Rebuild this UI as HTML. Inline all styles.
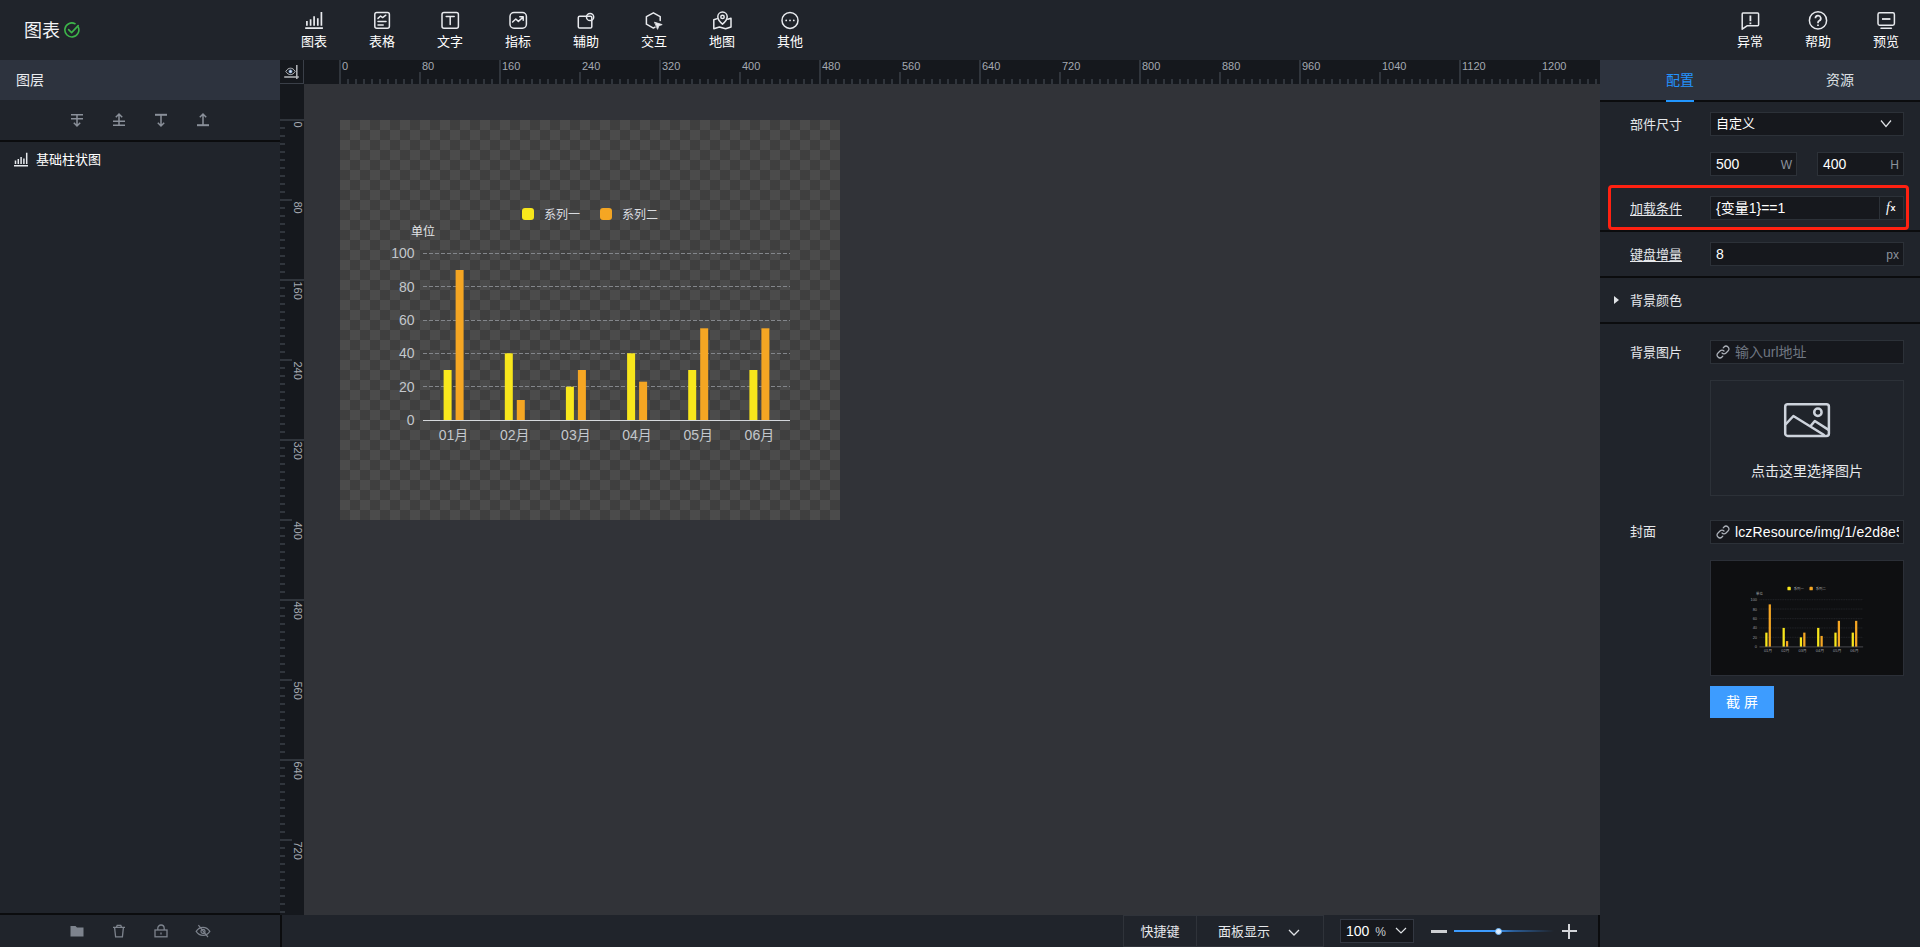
<!DOCTYPE html>
<html lang="zh-CN">
<head>
<meta charset="utf-8">
<title>图表</title>
<style>
*{box-sizing:border-box;margin:0;padding:0}
html,body{width:1920px;height:947px;overflow:hidden;background:#20242b;color:#fff;
  font-family:"Liberation Sans","Noto Sans CJK SC",sans-serif;font-size:13px}
.abs{position:absolute}
#top{position:absolute;left:0;top:0;width:1920px;height:60px;background:#20242b}
#title{position:absolute;left:24px;top:19px;font-size:18px;line-height:24px;color:#f2f3f5}
#ok{position:absolute;left:64px;top:22px;width:16px;height:16px}
.tb{position:absolute;top:0;width:68px;height:60px;text-align:center;color:#fff}
.tb svg{position:absolute;left:24px;top:10px;width:20px;height:20px}
.tb span{position:absolute;left:0;width:68px;top:33px;font-size:13px;line-height:18px}
/* left */
#left{position:absolute;left:0;top:60px;width:280px;height:887px;background:#20242b}
#lhead{position:absolute;left:0;top:0;width:280px;height:40px;background:#2d333e;font-size:14px;line-height:41px;padding-left:16px;color:#eceef1}
#ltools{position:absolute;left:0;top:40px;width:280px;height:40px}
#lsep{position:absolute;left:0;top:80px;width:280px;height:2px;background:#0b0c0e}
#layer{position:absolute;left:0;top:86px;width:280px;height:28px;line-height:28px;font-size:13px;color:#fff}
#lbot{position:absolute;left:0;top:853px;width:280px;height:34px;border-top:2px solid #0b0c0e}
/* ruler */
#corner{position:absolute;left:280px;top:60px;width:24px;height:24px;background:#15181d;border-right:1px solid #3a3f48;border-bottom:1px solid #3a3f48}
#hr{position:absolute;left:304px;top:60px;width:1296px;height:24px;background:#15181d;overflow:hidden}
#vr{position:absolute;left:280px;top:84px;width:24px;height:831px;background:#15181d;overflow:hidden}
#canvas{position:absolute;left:304px;top:84px;width:1296px;height:831px;background:#313338}
#widget{position:absolute;left:340px;top:120px;width:500px;height:400px;
  background-color:#3f3f3f;
  background-image:linear-gradient(45deg,#4b4b4b 25%,transparent 25%,transparent 75%,#4b4b4b 75%),linear-gradient(45deg,#4b4b4b 25%,transparent 25%,transparent 75%,#4b4b4b 75%);
  background-size:20px 20px;background-position:10px 0,20px 10px}
#cbot{position:absolute;left:280px;top:915px;width:1320px;height:32px;background:#20242b}
/* right */
#right{position:absolute;left:1600px;top:60px;width:320px;height:887px;background:#20242b}
#rtabs{position:absolute;left:0;top:0;width:320px;height:40px;background:#2d333e}
.rt{position:absolute;top:0;width:160px;height:40px;line-height:40px;text-align:center;font-size:14px;color:#dfe2e6}
.lab{position:absolute;left:30px;font-size:13px;line-height:20px;color:#e6e8eb;margin-top:1px}
.lab.u{text-decoration:underline;text-underline-offset:1.5px;text-decoration-thickness:1px}
.inp{position:absolute;height:24px;background:#16181d;border:1px solid #2c3138;font-size:14px;line-height:23px;color:#fff;padding-left:5px;white-space:nowrap;overflow:hidden}
.suf{position:absolute;right:4px;top:0.5px;color:#8b929c;font-size:12px}
.sep{position:absolute;left:0;width:320px;height:2px;background:#0b0c0e}
</style>
</head>
<body>
<div id="top">
  <div id="title">图表</div>
  <svg id="ok" viewBox="0 0 16 16" fill="none" stroke="#3db54a" stroke-width="1.6" stroke-linecap="round" stroke-linejoin="round"><path d="M14.3 5.2A7 7 0 1 1 11 1.7"/><path d="M4.6 7.6l3 3 6.6-7"/></svg>
  <div class="tb" style="left:280px"><svg viewBox="0 0 20 20" fill="none" stroke="#e8eaee" stroke-width="1.5" stroke-linecap="round" stroke-linejoin="round"><path d="M1.2 18.1h17.7M2.9 15.7v-4.8M6.6 15.7V9.2M10.1 15.7V6.2M13.8 15.7V8.2M17.4 15.7V2.1" stroke-linecap="butt" stroke-width="1.7"/></svg><span>图表</span></div>
  <div class="tb" style="left:348px"><svg viewBox="0 0 20 20" fill="none" stroke="#e8eaee" stroke-width="1.5" stroke-linecap="round" stroke-linejoin="round"><rect x="2.8" y="2.6" width="14.6" height="15.6" rx="2"/><path d="M6 8.4l2.6-2.4 2 1.6 3.2-2.4M6 11.6h8M6 15h5.2"/></svg><span>表格</span></div>
  <div class="tb" style="left:416px"><svg viewBox="0 0 20 20" fill="none" stroke="#e8eaee" stroke-width="1.5" stroke-linecap="round" stroke-linejoin="round"><rect x="2" y="2.6" width="16.4" height="15.6" rx="2"/><path d="M6.2 6.6h8M10.2 6.6v8"/></svg><span>文字</span></div>
  <div class="tb" style="left:484px"><svg viewBox="0 0 20 20" fill="none" stroke="#e8eaee" stroke-width="1.5" stroke-linecap="round" stroke-linejoin="round"><rect x="2" y="2.6" width="16.4" height="15.6" rx="4"/><path d="M4.6 12l3.2-3 2.6 2.4 4.6-4.2M11.8 6.8h3.4v3.4"/></svg><span>指标</span></div>
  <div class="tb" style="left:552px"><svg viewBox="0 0 20 20" fill="none" stroke="#e8eaee" stroke-width="1.5" stroke-linecap="round" stroke-linejoin="round"><rect x="2.3" y="6.2" width="13.5" height="11.9" rx="1.4"/><circle cx="14.1" cy="7" r="3.6"/></svg><span>辅助</span></div>
  <div class="tb" style="left:620px"><svg viewBox="0 0 20 20" fill="none" stroke="#e8eaee" stroke-width="1.5" stroke-linecap="round" stroke-linejoin="round"><path d="M16.2 10.4V6.6L9.4 2.8 2.4 6.6v7.6l7 3.9 1.6-.9"/><path d="M10.8 12.3l7.4 2.3-3.3 1.2-1.2 3.2z" fill="#e8eaee" stroke-width="0.8"/></svg><span>交互</span></div>
  <div class="tb" style="left:688px"><svg viewBox="0 0 20 20" fill="none" stroke="#e8eaee" stroke-width="1.5" stroke-linecap="round" stroke-linejoin="round"><path d="M10.5 14.2s-4.7-3.9-4.7-7.4a4.7 4.7 0 0 1 9.4 0c0 3.5-4.7 7.4-4.7 7.4z"/><circle cx="10.5" cy="6.9" r="1.7"/><path d="M5.2 8.6l-3.4 1.2v9l5.6-1.8 6.2 1.8 5.4-1.8V8.2l-3.2 1"/></svg><span>地图</span></div>
  <div class="tb" style="left:756px"><svg viewBox="0 0 20 20" fill="none" stroke="#e8eaee" stroke-width="1.5" stroke-linecap="round" stroke-linejoin="round"><circle cx="10" cy="10.4" r="8"/><path d="M6.2 10.4h.01M10 10.4h.01M13.8 10.4h.01" stroke-width="1.8"/></svg><span>其他</span></div>
  <div class="tb" style="left:1716px"><svg viewBox="0 0 20 20" fill="none" stroke="#e8eaee" stroke-width="1.5" stroke-linecap="round" stroke-linejoin="round"><path d="M3 3h14.6a1 1 0 0 1 1 1v10.8a1 1 0 0 1-1 1H7l-4.8 3.4V4a1 1 0 0 1 .8-1z"/><path d="M10.4 5.4v5.8M10.4 12.6v1.6" stroke-width="1.8" stroke-linecap="butt"/></svg><span>异常</span></div>
  <div class="tb" style="left:1784px"><svg viewBox="0 0 20 20" fill="none" stroke="#e8eaee" stroke-width="1.5" stroke-linecap="round" stroke-linejoin="round"><circle cx="10" cy="10.4" r="8.6"/><path d="M7.4 8.2a2.7 2.7 0 1 1 3.8 2.6c-.8.4-1.2 1-1.2 2v.4M10 14.6v1.5" stroke-linecap="butt" stroke-width="1.7"/></svg><span>帮助</span></div>
  <div class="tb" style="left:1852px"><svg viewBox="0 0 20 20" fill="none" stroke="#e8eaee" stroke-width="1.5" stroke-linecap="round" stroke-linejoin="round"><rect x="2" y="2.8" width="16.4" height="12.4" rx="1.6"/><path d="M6 9h8.4" stroke-width="1.8" stroke-linecap="butt"/><path d="M5 18.2h10.4"/></svg><span>预览</span></div>
</div>

<div id="left">
  <div id="lhead">图层</div>
  <div id="ltools"><svg class="abs" style="left:69px;top:12px;width:16px;height:16px" viewBox="0 0 16 16" fill="none" stroke="#8a909a" stroke-width="1.5" stroke-linecap="butt" stroke-linejoin="miter"><path d="M2 2.7h12M2 6.7h12M8 2.7v11.3M4.8 10.8L8 14l3.2-3.2"/></svg><svg class="abs" style="left:111px;top:12px;width:16px;height:16px" viewBox="0 0 16 16" fill="none" stroke="#8a909a" stroke-width="1.5" stroke-linecap="butt" stroke-linejoin="miter"><path d="M2 13.3h12M2 9.3h12M8 13.3V2M4.8 5.2L8 2l3.2 3.2"/></svg><svg class="abs" style="left:153px;top:12px;width:16px;height:16px" viewBox="0 0 16 16" fill="none" stroke="#8a909a" stroke-width="1.5" stroke-linecap="butt" stroke-linejoin="miter"><path d="M2 2.8h12" stroke-width="2"/><path d="M8 2.8v11.2M4.8 10.8L8 14l3.2-3.2"/></svg><svg class="abs" style="left:195px;top:12px;width:16px;height:16px" viewBox="0 0 16 16" fill="none" stroke="#8a909a" stroke-width="1.5" stroke-linecap="butt" stroke-linejoin="miter"><path d="M2 13.2h12" stroke-width="2"/><path d="M8 13.2V2M4.8 5.2L8 2l3.2 3.2"/></svg></div>
  <div id="lsep"></div>
  <div id="layer"><svg class="abs" style="left:14px;top:6px;width:14px;height:15px" viewBox="0 0 14 15" fill="none" stroke="#e6e9ed" stroke-width="1.5"><path d="M0 13.8h14M1.5 12V8.6M4.3 12V7M7.1 12V5M9.9 12V6.4M12.7 12V0.8"/></svg><span style="position:absolute;left:36px;top:0">基础柱状图</span></div>
  <div id="lbot"><svg class="abs" style="left:69px;top:7.5px;width:16px;height:16px" viewBox="0 0 16 16"><path d="M1.5 3h5l1.5 1.6h6.5V13.5h-13z" fill="#7d838d"/></svg><svg class="abs" style="left:111px;top:7.5px;width:16px;height:16px" viewBox="0 0 16 16" fill="none" stroke="#7d838d" stroke-width="1.3"><path d="M2 4.4h12M5.4 4.2l.8-1.8h3.6l.8 1.8M3.6 4.6l1 9.2h6.8l1-9.2"/></svg><svg class="abs" style="left:153px;top:7.5px;width:16px;height:16px" viewBox="0 0 16 16" fill="none" stroke="#7d838d" stroke-width="1.3"><rect x="2" y="7" width="12" height="6.8"/><path d="M4.8 7V5.2a3.2 3.2 0 0 1 6.4 0V7M8 9.4v2"/></svg><svg class="abs" style="left:195px;top:7.5px;width:16px;height:16px" viewBox="0 0 16 16" fill="none" stroke="#7d838d" stroke-width="1.2"><path d="M1.2 8.4C3 5.6 5.4 4.4 8 4.4s5 1.2 6.8 4c-1.8 2.8-4.2 4-6.8 4s-5-1.2-6.8-4z"/><circle cx="8" cy="8.4" r="2"/><path d="M3.4 2.2l9.6 12"/></svg></div>
</div>

<div id="corner"><svg class="abs" style="left:0;top:0;width:24px;height:24px" viewBox="0 0 24 24" fill="none" stroke="#b4b6ba" stroke-width="1"><path d="M5.8 11.4c1.3-2.2 2.9-3.2 4.7-3.2s3.4 1 4.7 3.2c-1.3 2.2-2.9 3.2-4.7 3.2s-3.4-1-4.7-3.2z"/><circle cx="10.5" cy="11.4" r="1.5" fill="#dfe6f0" stroke="#7fa6d8" stroke-width="0.8"/><path d="M4.2 17.1h14.6M16.8 4.9V19" stroke-width="1.5"/></svg></div>
<div id="hr"><svg class="abs" style="left:0;top:0" width="1296" height="24" viewBox="0 0 1296 24"><path d="M36 0V24M44 19V24M52 19V24M60 19V24M68 19V24M76 19V24M84 19V24M92 19V24M100 19V24M108 19V24M116 12V24M124 19V24M132 19V24M140 19V24M148 19V24M156 19V24M164 19V24M172 19V24M180 19V24M188 19V24M196 0V24M204 19V24M212 19V24M220 19V24M228 19V24M236 19V24M244 19V24M252 19V24M260 19V24M268 19V24M276 12V24M284 19V24M292 19V24M300 19V24M308 19V24M316 19V24M324 19V24M332 19V24M340 19V24M348 19V24M356 0V24M364 19V24M372 19V24M380 19V24M388 19V24M396 19V24M404 19V24M412 19V24M420 19V24M428 19V24M436 12V24M444 19V24M452 19V24M460 19V24M468 19V24M476 19V24M484 19V24M492 19V24M500 19V24M508 19V24M516 0V24M524 19V24M532 19V24M540 19V24M548 19V24M556 19V24M564 19V24M572 19V24M580 19V24M588 19V24M596 12V24M604 19V24M612 19V24M620 19V24M628 19V24M636 19V24M644 19V24M652 19V24M660 19V24M668 19V24M676 0V24M684 19V24M692 19V24M700 19V24M708 19V24M716 19V24M724 19V24M732 19V24M740 19V24M748 19V24M756 12V24M764 19V24M772 19V24M780 19V24M788 19V24M796 19V24M804 19V24M812 19V24M820 19V24M828 19V24M836 0V24M844 19V24M852 19V24M860 19V24M868 19V24M876 19V24M884 19V24M892 19V24M900 19V24M908 19V24M916 12V24M924 19V24M932 19V24M940 19V24M948 19V24M956 19V24M964 19V24M972 19V24M980 19V24M988 19V24M996 0V24M1004 19V24M1012 19V24M1020 19V24M1028 19V24M1036 19V24M1044 19V24M1052 19V24M1060 19V24M1068 19V24M1076 12V24M1084 19V24M1092 19V24M1100 19V24M1108 19V24M1116 19V24M1124 19V24M1132 19V24M1140 19V24M1148 19V24M1156 0V24M1164 19V24M1172 19V24M1180 19V24M1188 19V24M1196 19V24M1204 19V24M1212 19V24M1220 19V24M1228 19V24M1236 12V24M1244 19V24M1252 19V24M1260 19V24M1268 19V24M1276 19V24M1284 19V24M1292 19V24" stroke="#30353c" stroke-width="2" fill="none"/><g font-family="Liberation Sans, sans-serif" font-size="11" fill="#a4a9b1"><text x="38" y="10">0</text><text x="118" y="10">80</text><text x="198" y="10">160</text><text x="278" y="10">240</text><text x="358" y="10">320</text><text x="438" y="10">400</text><text x="518" y="10">480</text><text x="598" y="10">560</text><text x="678" y="10">640</text><text x="758" y="10">720</text><text x="838" y="10">800</text><text x="918" y="10">880</text><text x="998" y="10">960</text><text x="1078" y="10">1040</text><text x="1158" y="10">1120</text><text x="1238" y="10">1200</text></g></svg></div>
<div id="vr"><svg class="abs" style="left:0;top:0" width="24" height="831" viewBox="0 0 24 831"><path d="M0 36H24M0 44H5M0 52H5M0 60H5M0 68H5M0 76H5M0 84H5M0 92H5M0 100H5M0 108H5M0 116H12M0 124H5M0 132H5M0 140H5M0 148H5M0 156H5M0 164H5M0 172H5M0 180H5M0 188H5M0 196H24M0 204H5M0 212H5M0 220H5M0 228H5M0 236H5M0 244H5M0 252H5M0 260H5M0 268H5M0 276H12M0 284H5M0 292H5M0 300H5M0 308H5M0 316H5M0 324H5M0 332H5M0 340H5M0 348H5M0 356H24M0 364H5M0 372H5M0 380H5M0 388H5M0 396H5M0 404H5M0 412H5M0 420H5M0 428H5M0 436H12M0 444H5M0 452H5M0 460H5M0 468H5M0 476H5M0 484H5M0 492H5M0 500H5M0 508H5M0 516H24M0 524H5M0 532H5M0 540H5M0 548H5M0 556H5M0 564H5M0 572H5M0 580H5M0 588H5M0 596H12M0 604H5M0 612H5M0 620H5M0 628H5M0 636H5M0 644H5M0 652H5M0 660H5M0 668H5M0 676H24M0 684H5M0 692H5M0 700H5M0 708H5M0 716H5M0 724H5M0 732H5M0 740H5M0 748H5M0 756H12M0 764H5M0 772H5M0 780H5M0 788H5M0 796H5M0 804H5M0 812H5M0 820H5M0 828H5M0 836H24" stroke="#30353c" stroke-width="2" fill="none"/><g font-family="Liberation Sans, sans-serif" font-size="11" fill="#a4a9b1"><text transform="translate(14,37.5) rotate(90)">0</text><text transform="translate(14,117.5) rotate(90)">80</text><text transform="translate(14,197.5) rotate(90)">160</text><text transform="translate(14,277.5) rotate(90)">240</text><text transform="translate(14,357.5) rotate(90)">320</text><text transform="translate(14,437.5) rotate(90)">400</text><text transform="translate(14,517.5) rotate(90)">480</text><text transform="translate(14,597.5) rotate(90)">560</text><text transform="translate(14,677.5) rotate(90)">640</text><text transform="translate(14,757.5) rotate(90)">720</text><text transform="translate(14,837.5) rotate(90)">800</text></g></svg></div>
<div id="canvas"></div>
<div id="widget"><svg class="abs" style="left:0;top:0" width="500" height="400" viewBox="0 0 500 400" font-family="Liberation Sans, Noto Sans CJK SC, sans-serif"><path d="M83 266.5H450" stroke="#83868b" stroke-width="1" stroke-dasharray="4 2" fill="none"/><path d="M83 233.5H450" stroke="#83868b" stroke-width="1" stroke-dasharray="4 2" fill="none"/><path d="M83 200.5H450" stroke="#83868b" stroke-width="1" stroke-dasharray="4 2" fill="none"/><path d="M83 166.5H450" stroke="#83868b" stroke-width="1" stroke-dasharray="4 2" fill="none"/><path d="M83 133.5H450" stroke="#83868b" stroke-width="1" stroke-dasharray="4 2" fill="none"/><text x="74.6" y="305" font-size="14" fill="#c3c7cc" text-anchor="end">0</text><text x="74.6" y="271.7" font-size="14" fill="#c3c7cc" text-anchor="end">20</text><text x="74.6" y="238.3" font-size="14" fill="#c3c7cc" text-anchor="end">40</text><text x="74.6" y="205" font-size="14" fill="#c3c7cc" text-anchor="end">60</text><text x="74.6" y="171.7" font-size="14" fill="#c3c7cc" text-anchor="end">80</text><text x="74.6" y="138.3" font-size="14" fill="#c3c7cc" text-anchor="end">100</text><text x="71" y="116" font-size="12" fill="#e4e6e9">单位</text><rect x="182" y="88" width="12" height="12" rx="3" fill="#f8e71c"/><text x="204" y="98.5" font-size="12" fill="#dcdee2">系列一</text><rect x="260" y="88" width="12" height="12" rx="3" fill="#f5a623"/><text x="282" y="98.5" font-size="12" fill="#dcdee2">系列二</text><rect x="103.6" y="250" width="8" height="50" fill="#f8e71c"/><rect x="115.6" y="150" width="8" height="150" fill="#f5a623"/><text x="113.6" y="320" font-size="14" fill="#c3c7cc" text-anchor="middle">01月</text><rect x="164.8" y="233.3" width="8" height="66.7" fill="#f8e71c"/><rect x="176.8" y="280" width="8" height="20" fill="#f5a623"/><text x="174.8" y="320" font-size="14" fill="#c3c7cc" text-anchor="middle">02月</text><rect x="225.9" y="266.7" width="8" height="33.3" fill="#f8e71c"/><rect x="237.9" y="250" width="8" height="50" fill="#f5a623"/><text x="235.9" y="320" font-size="14" fill="#c3c7cc" text-anchor="middle">03月</text><rect x="287.1" y="233.3" width="8" height="66.7" fill="#f8e71c"/><rect x="299.1" y="261.7" width="8" height="38.3" fill="#f5a623"/><text x="297.1" y="320" font-size="14" fill="#c3c7cc" text-anchor="middle">04月</text><rect x="348.2" y="250" width="8" height="50" fill="#f8e71c"/><rect x="360.2" y="208.3" width="8" height="91.7" fill="#f5a623"/><text x="358.2" y="320" font-size="14" fill="#c3c7cc" text-anchor="middle">05月</text><rect x="409.4" y="250" width="8" height="50" fill="#f8e71c"/><rect x="421.4" y="208.3" width="8" height="91.7" fill="#f5a623"/><text x="419.4" y="320" font-size="14" fill="#c3c7cc" text-anchor="middle">06月</text><path d="M83 300.5H450" stroke="#d4d7db" stroke-width="1" fill="none"/></svg></div>
<div id="cbot"><div class="abs" style="left:0;top:0;width:2px;height:32px;background:#0b0c0e"></div>
<div class="abs" style="left:1318px;top:0;width:2px;height:32px;background:#0b0c0e"></div>
<div class="abs" style="left:843px;top:0;width:74px;height:32px;border:1px solid #2f333a;line-height:32px;text-align:center;font-size:13px;color:#e6e8eb">快捷键</div>
<div class="abs" style="left:916px;top:0;width:128px;height:32px;border:1px solid #2f333a;line-height:32px;font-size:13px;color:#e6e8eb;padding-left:21px">面板显示
<svg class="abs" style="left:91px;top:11.5px;width:12px;height:10px" viewBox="0 0 12 10" fill="none" stroke="#dfe2e6" stroke-width="1.3"><path d="M1 2l5 5 5-5"/></svg></div>
<div class="abs" style="left:1060px;top:4px;width:74px;height:24px;background:#16181d;border:1px solid #333842;line-height:22px;font-size:14px;color:#fff;padding-left:5px">100<span style="font-size:12px;color:#c9ccd1;margin-left:6px">%</span>
<svg class="abs" style="left:54px;top:6px;width:12px;height:10px" viewBox="0 0 12 10" fill="none" stroke="#dfe2e6" stroke-width="1.2"><path d="M1 2l5 5 5-5"/></svg></div>
<div class="abs" style="left:1151px;top:14.5px;width:16px;height:3px;background:#cdcfd2"></div>
<div class="abs" style="left:1174px;top:15px;width:100px;height:2px;background:linear-gradient(90deg,#3d9cff 0%,#3d9cff 40%,#2a5c96 60%,rgba(42,92,150,0) 100%)"></div>
<div class="abs" style="left:1214.5px;top:12.5px;width:7px;height:7px;border-radius:50%;background:#dcedff;border:1.5px solid #6db5f7"></div>
<div class="abs" style="left:1282px;top:15.2px;width:14.5px;height:1.6px;background:#d3d5d9"></div>
<div class="abs" style="left:1288.4px;top:9px;width:1.6px;height:14.5px;background:#d3d5d9"></div>
</div>

<div id="right">
  <div id="rtabs">
    <div class="rt" style="left:0;color:#2492fd">配置</div>
    <div class="rt" style="left:160px">资源</div>
  </div>
  <div class="abs" style="left:0;top:40px;width:320px;height:2px;background:#0b0c0e"></div>
<div class="abs" style="left:66px;top:40px;width:28px;height:2px;background:#2196ff"></div>
<div class="lab" style="top:54px">部件尺寸</div>
<div class="inp" style="left:110px;top:52px;width:194px;font-size:13px;line-height:22px">自定义
<svg class="abs" style="left:169px;top:6px;width:12px;height:10px" viewBox="0 0 12 10" fill="none" stroke="#dfe2e6" stroke-width="1.2"><path d="M1 1.5l5 6 5-6"/></svg></div>
<div class="inp" style="left:110px;top:92px;width:87px">500<span class="suf">W</span></div>
<div class="inp" style="left:217px;top:92px;width:87px">400<span class="suf">H</span></div>

<div class="abs" style="left:8px;top:125px;width:301px;height:45px;border:3px solid #ff2111;border-radius:4px"></div>
<div class="lab u" style="top:138px">加载条件</div>
<div class="inp" style="left:110px;top:136px;width:194px">{变量1}==1
<div class="abs" style="left:168px;top:0;width:24px;height:22px;border-left:1px solid #2c3138;background:#1a1d22"></div>
<span class="abs" style="left:175px;top:-1px;font-family:'Liberation Serif',serif;font-style:italic;font-size:14px;color:#fff">f<span style="font-size:9px;font-style:normal;font-weight:bold;font-family:'Liberation Sans',sans-serif;position:relative;top:-1.5px;left:0.5px">x</span></span></div>
<div class="sep" style="top:170px"></div>

<div class="lab u" style="top:184px">键盘增量</div>
<div class="inp" style="left:110px;top:182px;width:194px">8<span class="suf">px</span></div>
<div class="sep" style="top:216px"></div>

<div class="abs" style="left:13.5px;top:236px;width:0;height:0;border-left:5px solid #dfe2e6;border-top:4px solid transparent;border-bottom:4px solid transparent"></div>
<div class="lab" style="top:230px">背景颜色</div>
<div class="sep" style="top:262px"></div>

<div class="lab" style="top:282px">背景图片</div>
<div class="inp" style="left:110px;top:280px;width:194px;padding-left:24px;color:#6f7681">输入url地址
<svg class="abs" style="left:5px;top:4px;width:14px;height:14px" viewBox="0 0 14 14" fill="none" stroke="#aeb3bb" stroke-width="1.2" stroke-linecap="round"><path d="M6 8a2.8 2.8 0 0 0 4 0l2-2a2.8 2.8 0 0 0-4-4l-.8.8M8 6a2.8 2.8 0 0 0-4 0l-2 2a2.8 2.8 0 0 0 4 4l.8-.800"/></svg></div>
<div class="abs" style="left:110px;top:320px;width:194px;height:116px;border:1px solid #2c3138">
<svg class="abs" style="left:71px;top:20px;width:50px;height:38px" viewBox="0 0 50 38" fill="none" stroke="#cdd3dc" stroke-width="2.5" stroke-linejoin="round"><rect x="3.2" y="3.3" width="43.7" height="31.6" rx="2.5"/><circle cx="35.9" cy="11.3" r="3.7"/><path d="M3.5 23.5l7.9-8.5 31.1 19.3M28.8 24.8l4-4.8 13.8 8.9"/></svg>
<div class="abs" style="left:0;top:80px;width:192px;text-align:center;font-size:14px;line-height:20px;color:#e6e8eb">点击这里选择图片</div>
</div>

<div class="lab" style="top:461px">封面</div>
<div class="inp" style="left:110px;top:460px;width:194px;padding-left:24px;font-size:14px"><span style="display:block;width:164px;height:17.5px;overflow:hidden;letter-spacing:0.13px">lczResource/img/1/e2d8e5</span>
<svg class="abs" style="left:5px;top:4px;width:14px;height:14px" viewBox="0 0 14 14" fill="none" stroke="#aeb3bb" stroke-width="1.2" stroke-linecap="round"><path d="M6 8a2.8 2.8 0 0 0 4 0l2-2a2.8 2.8 0 0 0-4-4l-.8.8M8 6a2.8 2.8 0 0 0-4 0l-2 2a2.8 2.8 0 0 0 4 4l.8-.800"/></svg></div>
<div class="abs" style="left:110px;top:500px;width:194px;height:116px;border:1px solid #2b2f37;background:#0e0f11"><svg class="abs" style="left:25.4px;top:0.8px" width="141.25" height="113" viewBox="0 0 500 400" font-family="Liberation Sans, Noto Sans CJK SC, sans-serif"><path d="M83 266.5H450" stroke="#3c3f44" stroke-width="1.5" stroke-dasharray="4 2" fill="none"/><path d="M83 233.5H450" stroke="#3c3f44" stroke-width="1.5" stroke-dasharray="4 2" fill="none"/><path d="M83 200.5H450" stroke="#3c3f44" stroke-width="1.5" stroke-dasharray="4 2" fill="none"/><path d="M83 166.5H450" stroke="#3c3f44" stroke-width="1.5" stroke-dasharray="4 2" fill="none"/><path d="M83 133.5H450" stroke="#3c3f44" stroke-width="1.5" stroke-dasharray="4 2" fill="none"/><text x="74.6" y="305" font-size="14" fill="#9a9da2" text-anchor="end">0</text><text x="74.6" y="271.7" font-size="14" fill="#9a9da2" text-anchor="end">20</text><text x="74.6" y="238.3" font-size="14" fill="#9a9da2" text-anchor="end">40</text><text x="74.6" y="205" font-size="14" fill="#9a9da2" text-anchor="end">60</text><text x="74.6" y="171.7" font-size="14" fill="#9a9da2" text-anchor="end">80</text><text x="74.6" y="138.3" font-size="14" fill="#9a9da2" text-anchor="end">100</text><text x="71" y="116" font-size="12" fill="#a4a7ab">单位</text><rect x="182" y="88" width="12" height="12" rx="3" fill="#f8e71c"/><text x="204" y="98.5" font-size="12" fill="#a4a7ab">系列一</text><rect x="260" y="88" width="12" height="12" rx="3" fill="#f5a623"/><text x="282" y="98.5" font-size="12" fill="#a4a7ab">系列二</text><rect x="103.6" y="250" width="8" height="50" fill="#f8e71c"/><rect x="115.6" y="150" width="8" height="150" fill="#f5a623"/><text x="113.6" y="320" font-size="14" fill="#9a9da2" text-anchor="middle">01月</text><rect x="164.8" y="233.3" width="8" height="66.7" fill="#f8e71c"/><rect x="176.8" y="280" width="8" height="20" fill="#f5a623"/><text x="174.8" y="320" font-size="14" fill="#9a9da2" text-anchor="middle">02月</text><rect x="225.9" y="266.7" width="8" height="33.3" fill="#f8e71c"/><rect x="237.9" y="250" width="8" height="50" fill="#f5a623"/><text x="235.9" y="320" font-size="14" fill="#9a9da2" text-anchor="middle">03月</text><rect x="287.1" y="233.3" width="8" height="66.7" fill="#f8e71c"/><rect x="299.1" y="261.7" width="8" height="38.3" fill="#f5a623"/><text x="297.1" y="320" font-size="14" fill="#9a9da2" text-anchor="middle">04月</text><rect x="348.2" y="250" width="8" height="50" fill="#f8e71c"/><rect x="360.2" y="208.3" width="8" height="91.7" fill="#f5a623"/><text x="358.2" y="320" font-size="14" fill="#9a9da2" text-anchor="middle">05月</text><rect x="409.4" y="250" width="8" height="50" fill="#f8e71c"/><rect x="421.4" y="208.3" width="8" height="91.7" fill="#f5a623"/><text x="419.4" y="320" font-size="14" fill="#9a9da2" text-anchor="middle">06月</text><path d="M83 300.5H450" stroke="#77797e" stroke-width="2" fill="none"/></svg></div>
<div class="abs" style="left:110px;top:626px;width:64px;height:32px;background:#3d9cff;color:#fff;font-size:14px;line-height:32px;text-align:center">截 屏</div>

</div>
</body>
</html>
